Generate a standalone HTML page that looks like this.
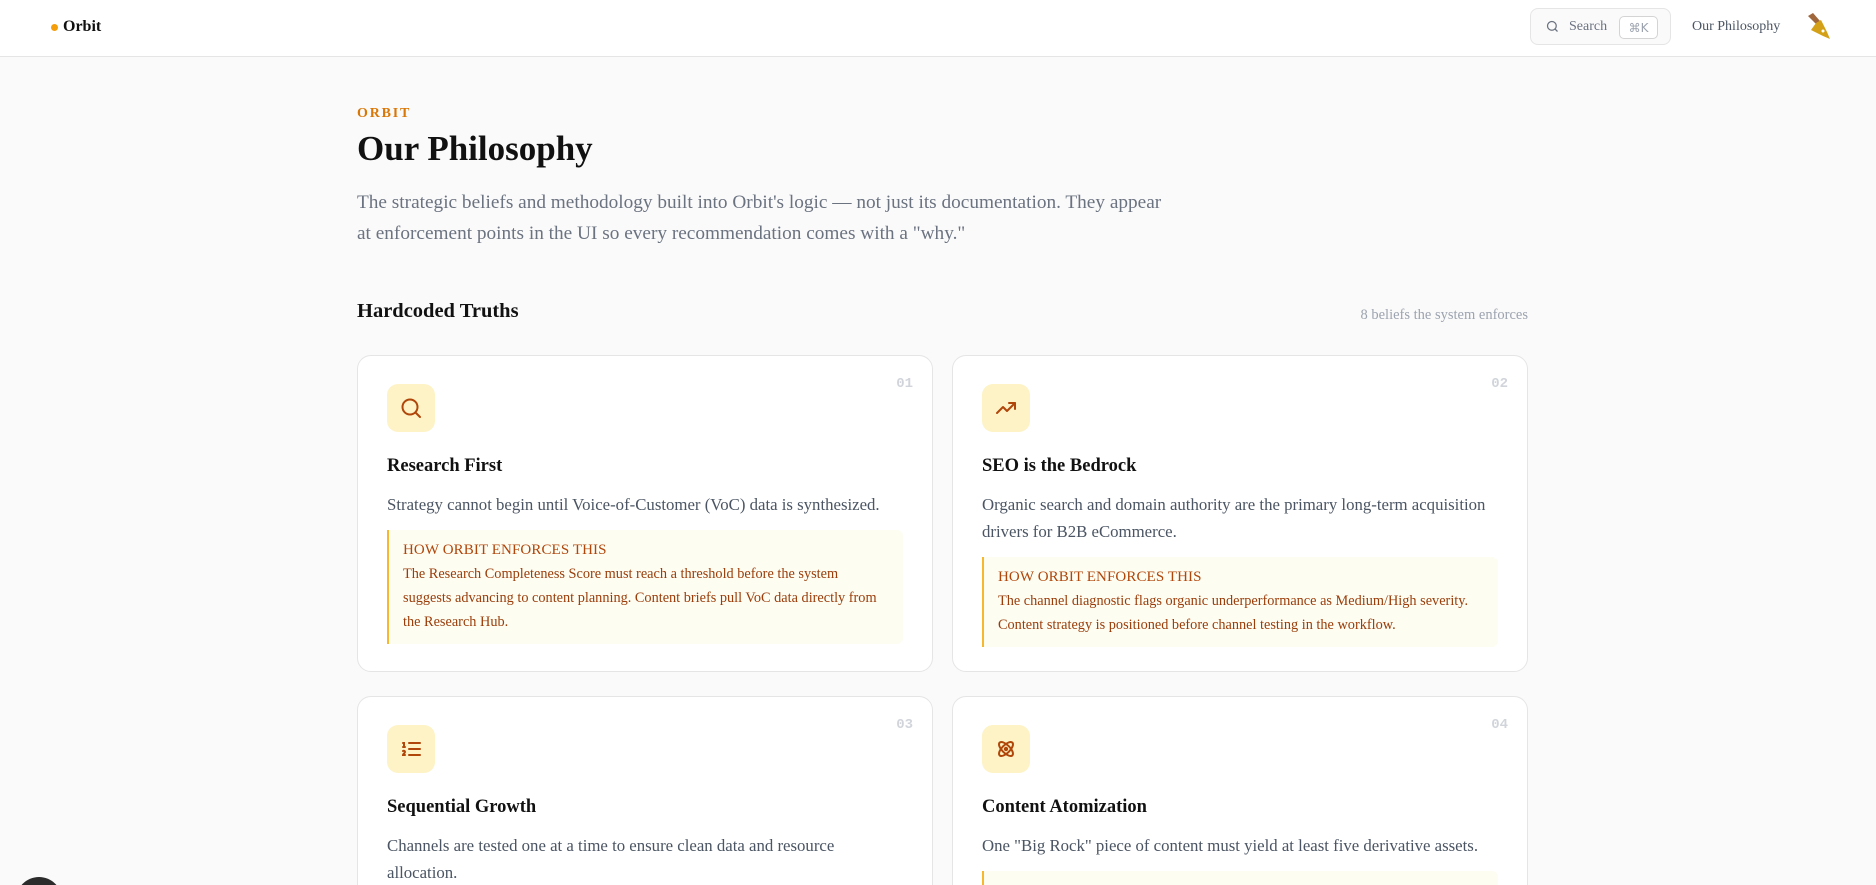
<!DOCTYPE html>
<html><head><meta charset="utf-8"><style>
*{box-sizing:border-box;margin:0;padding:0}
html,body{width:1876px;height:885px;overflow:hidden}
body{background:#fafafa;font-family:"Liberation Serif",serif;color:#111}
#root{position:relative;width:1876px;height:885px;overflow:hidden}
.hdr{position:absolute;left:0;top:0;width:1876px;height:57px;background:#fff;border-bottom:1px solid #e5e5e5}
.logo{position:absolute;left:51px;top:18px;font-weight:bold;font-size:16px;display:flex;align-items:center}
.logo i{width:7px;height:7px;border-radius:50%;background:#f59e0b;margin-right:5px;display:inline-block}
.search{position:absolute;left:1530px;top:8px;width:141px;height:37px;border:1px solid #e5e5e5;border-radius:8px;background:#fafafa;display:flex;align-items:center;padding-left:14px;font-size:14px;color:#6b7280}
.search svg{margin-right:9px}
.kbd{position:absolute;left:88px;top:7px;width:39px;height:23px;border:1px solid #d4d4d4;border-radius:5px;background:#fff;font-size:12px;color:#9ca3af;display:flex;align-items:center;justify-content:center;font-family:"DejaVu Sans",sans-serif}
.nav{position:absolute;left:1692px;top:19px;font-size:14px;color:#4b5563}
.pen{position:absolute;left:1804px;top:12px}
.eyebrow{position:absolute;left:357px;top:106px;font-size:14px;font-weight:bold;color:#d97706;letter-spacing:1.8px}
h1{position:absolute;left:357px;top:129px;font-size:35px;font-weight:bold}
.lead{position:absolute;left:357px;top:187px;width:815px;font-size:19.3px;line-height:31px;color:#6b7280}
h2{position:absolute;left:357px;top:300px;font-size:20.5px;font-weight:bold}
.cnt{position:absolute;right:348px;top:307px;font-size:14.5px;color:#9ca3af}
.card{position:absolute;width:576px;background:#fff;border:1px solid #e5e5e5;border-radius:14px;padding:28px 29px 28px 29px}
.num{position:absolute;right:19px;top:20px;font-family:"Liberation Mono",monospace;font-weight:bold;font-size:14px;color:#d1d5db}
.ic{width:48px;height:48px;border-radius:11px;background:#fdf3c6;display:flex;align-items:center;justify-content:center}
.t{font-size:18.5px;font-weight:bold;margin-top:22px;line-height:24px}
.d{font-size:16.8px;line-height:27px;color:#4b5563;margin-top:13px}
.enf{margin-top:12px;background:#fefdf2;border-left:2px solid #f5b82e;border-radius:0 6px 6px 0;padding:10px 15px 10px 14px;color:#b0460a}
.enf .l{font-size:15px;line-height:20px;letter-spacing:.1px;margin-bottom:2px}
.enf .x{font-size:14.3px;line-height:24px;color:#9a3d0a}
.fab{position:absolute;left:16px;top:877px;width:46px;height:46px;border-radius:50%;background:#2b2b2b}
</style></head><body><div id="root">
<div class="hdr">
<div class="logo"><i></i>Orbit</div>
<div class="search"><svg width="15" height="15" viewBox="0 0 24 24" fill="none" stroke="#6b7280" stroke-width="2"><circle cx="11" cy="11" r="7"/><path d="M20 20l-4-4"/></svg>Search<div class="kbd">⌘K</div></div>
<div class="nav">Our Philosophy</div>
<svg class="pen" width="30" height="30" viewBox="0 0 30 30"><path d="M4 4l5-3 7 8-4 3z" fill="#a0663c"/><path d="M12 11l5-3 6 12 3 7-7-3-12-6z" fill="#d4a017"/><circle cx="19" cy="19" r="1.5" fill="#fff"/></svg>
</div>
<div class="eyebrow">ORBIT</div>
<h1>Our Philosophy</h1>
<div class="lead">The strategic beliefs and methodology built into Orbit's logic — not just its documentation. They appear at enforcement points in the UI so every recommendation comes with a "why."</div>
<h2>Hardcoded Truths</h2>
<div class="cnt">8 beliefs the system enforces</div>

<div class="card" style="left:357px;top:355px;height:317px">
<div class="num">01</div>
<div class="ic"><svg width="24" height="24" viewBox="0 0 24 24" fill="none" stroke="#b0460a" stroke-width="2" stroke-linecap="round"><circle cx="11" cy="11" r="7.5"/><path d="M21 21l-4.5-4.5"/></svg></div>
<div class="t">Research First</div>
<div class="d">Strategy cannot begin until Voice-of-Customer (VoC) data is synthesized.</div>
<div class="enf"><div class="l">HOW ORBIT ENFORCES THIS</div><div class="x">The Research Completeness Score must reach a threshold before the system suggests advancing to content planning. Content briefs pull VoC data directly from the Research Hub.</div></div>
</div>

<div class="card" style="left:952px;top:355px;height:317px">
<div class="num">02</div>
<div class="ic"><svg width="24" height="24" viewBox="0 0 24 24" fill="none" stroke="#b0460a" stroke-width="2" stroke-linecap="round" stroke-linejoin="round"><path d="M3 17l6-6 4 4 8-8"/><path d="M15 7h6v6"/></svg></div>
<div class="t">SEO is the Bedrock</div>
<div class="d">Organic search and domain authority are the primary long-term acquisition drivers for B2B eCommerce.</div>
<div class="enf"><div class="l">HOW ORBIT ENFORCES THIS</div><div class="x">The channel diagnostic flags organic underperformance as Medium/High severity. Content strategy is positioned before channel testing in the workflow.</div></div>
</div>

<div class="card" style="left:357px;top:696px;height:260px">
<div class="num">03</div>
<div class="ic"><svg width="24" height="24" viewBox="0 0 24 24" fill="none" stroke="#b0460a" stroke-width="2" stroke-linecap="round"><path d="M10 6h11M10 12h11M10 18h11"/><path d="M4 6h1v4M4 10h2M6 18H4c0-1 2-2 2-3s-1-1.5-2-1"/></svg></div>
<div class="t">Sequential Growth</div>
<div class="d" style="width:480px">Channels are tested one at a time to ensure clean data and resource allocation.</div>
</div>

<div class="card" style="left:952px;top:696px;height:260px">
<div class="num">04</div>
<div class="ic"><svg width="24" height="24" viewBox="0 0 24 24" fill="none" stroke="#b0460a" stroke-width="2"><circle cx="12" cy="12" r="1.2" fill="#b0460a"/><ellipse cx="12" cy="12" rx="9" ry="4" transform="rotate(45 12 12)"/><ellipse cx="12" cy="12" rx="9" ry="4" transform="rotate(-45 12 12)"/></svg></div>
<div class="t">Content Atomization</div>
<div class="d">One "Big Rock" piece of content must yield at least five derivative assets.</div>
<div class="enf" style="height:60px"></div>
</div>
<div class="fab"></div>
</div></body></html>
